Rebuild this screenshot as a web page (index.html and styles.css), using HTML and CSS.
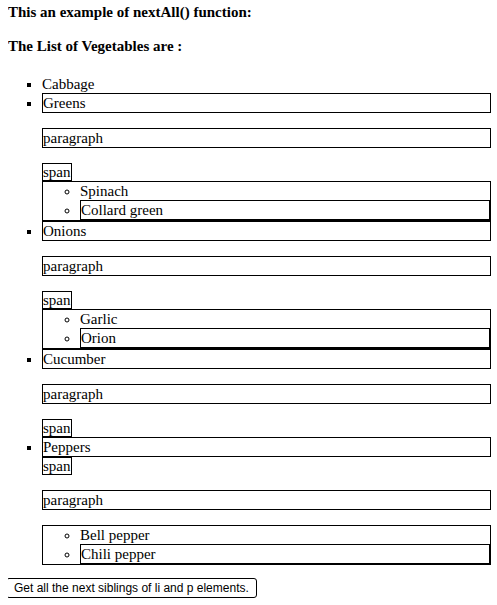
FILE: index.html
```html
<!DOCTYPE html>
<html>
<head>
<meta charset="utf-8">
<link rel="stylesheet" href="styles.css">
</head>
<body>
<h3 class="title">This an example of nextAll() function:</h3>
<h3 class="title">The List of Vegetables are :</h3>
<ul class="veg">
  <li>Cabbage</li>
  <li class="hl">Greens</li>
  <p class="hl">paragraph</p>
  <span class="hl">span</span>
  <ul class="sub hl">
    <li>Spinach</li>
    <li class="hl">Collard green</li>
  </ul>
  <li class="hl">Onions</li>
  <p class="hl">paragraph</p>
  <span class="hl">span</span>
  <ul class="sub hl">
    <li>Garlic</li>
    <li class="hl">Orion</li>
  </ul>
  <li class="hl">Cucumber</li>
  <p class="hl">paragraph</p>
  <span class="hl">span</span>
  <li class="hl">Peppers</li>
  <span class="hl">span</span>
  <p class="hl">paragraph</p>
  <ul class="sub hl">
    <li>Bell pepper</li>
    <li class="hl">Chili pepper</li>
  </ul>
</ul>
<button class="btn">Get all the next siblings of li and p elements.</button>
</body>
</html>
```
FILE: styles.css
```css
html, body {
  background: #fff;
}
body {
  margin: 0 6px 0 8px;
  padding-top: 3px;
  font-family: "Liberation Serif", "Times New Roman", serif;
  font-size: 15px;
  line-height: 18px;
  color: #000;
}
.title {
  font-size: 15px;
  font-weight: bold;
  line-height: 18px;
  margin: 0 0 16px;
}
.veg {
  list-style: square;
  margin: 20px 0 13px;
  padding-left: 34px;
}
.veg p {
  margin: 15px 0;
}
.sub {
  list-style: circle;
  margin: 0;
  padding-left: 37px;
}
.hl {
  border: 1px solid #000;
}
.btn {
  margin-left: -2px;
  font-family: "Liberation Sans", Arial, sans-serif;
  font-size: 12px;
  line-height: 14px;
  padding: 2px 7px;
  border: 1px solid #000;
  border-radius: 3px;
  background: #fff;
  color: #000;
}
```
